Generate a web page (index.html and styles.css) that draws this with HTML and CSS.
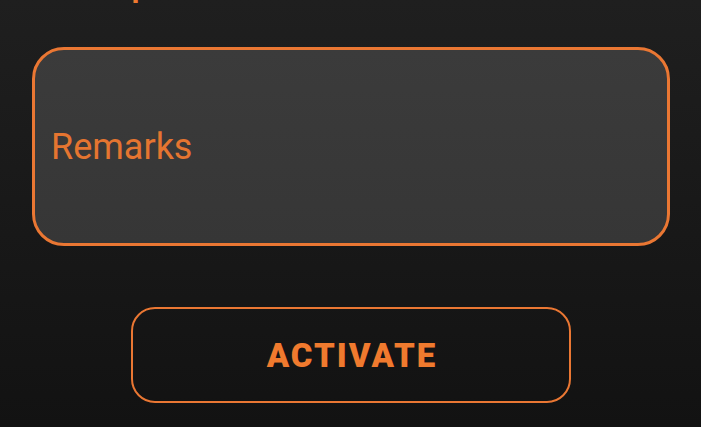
FILE: index.html
```html
<!DOCTYPE html>
<html lang="en">
<head>
<meta charset="utf-8">
<title>Activate</title>
<link rel="stylesheet" href="styles.css">
</head>
<body>
<main class="screen">
  <h2 class="section-title">Description</h2>
  <input class="remarks" type="text" placeholder="Remarks">
  <div class="actions">
    <button class="activate" type="button">ACTIVATE</button>
  </div>
</main>
</body>
</html>
```
FILE: styles.css
```css
html, body {
  margin: 0;
  padding: 0;
  height: 100%;
}
body {
  background: linear-gradient(180deg, #1f1f1f 0%, #181818 55%, #121212 100%);
  font-family: Roboto, "Liberation Sans", sans-serif;
  overflow: hidden;
}
.screen {
  display: flex;
  flex-direction: column;
  padding: 0 31px 0 32px;
}
.section-title {
  margin: -31px 0 0 14px;
  font-size: 30px;
  line-height: 36px;
  font-weight: 700;
  color: #ef7a30;
}
.remarks {
  box-sizing: border-box;
  margin-top: 42px;
  width: 100%;
  height: 199px;
  border: 3px solid #ea7733;
  border-radius: 32px;
  background: linear-gradient(180deg, #3b3b3b 0%, #363636 100%);
  padding: 0 16px;
  font-family: Roboto, "Liberation Sans", sans-serif;
  font-size: 36px;
  color: #e8772f;
  outline: none;
}
.remarks::placeholder {
  color: #e57530;
  opacity: 1;
}
.actions {
  display: flex;
  justify-content: center;
  margin-top: 61px;
}
.activate {
  box-sizing: border-box;
  width: 440px;
  height: 96px;
  border: 2px solid #ea7733;
  border-radius: 24px;
  background: transparent;
  color: #f07a2e;
  font-family: Roboto, "Liberation Sans", sans-serif;
  font-size: 33px;
  font-weight: 900;
  letter-spacing: 2px;
  padding: 0 0 0 2px;
}
```
